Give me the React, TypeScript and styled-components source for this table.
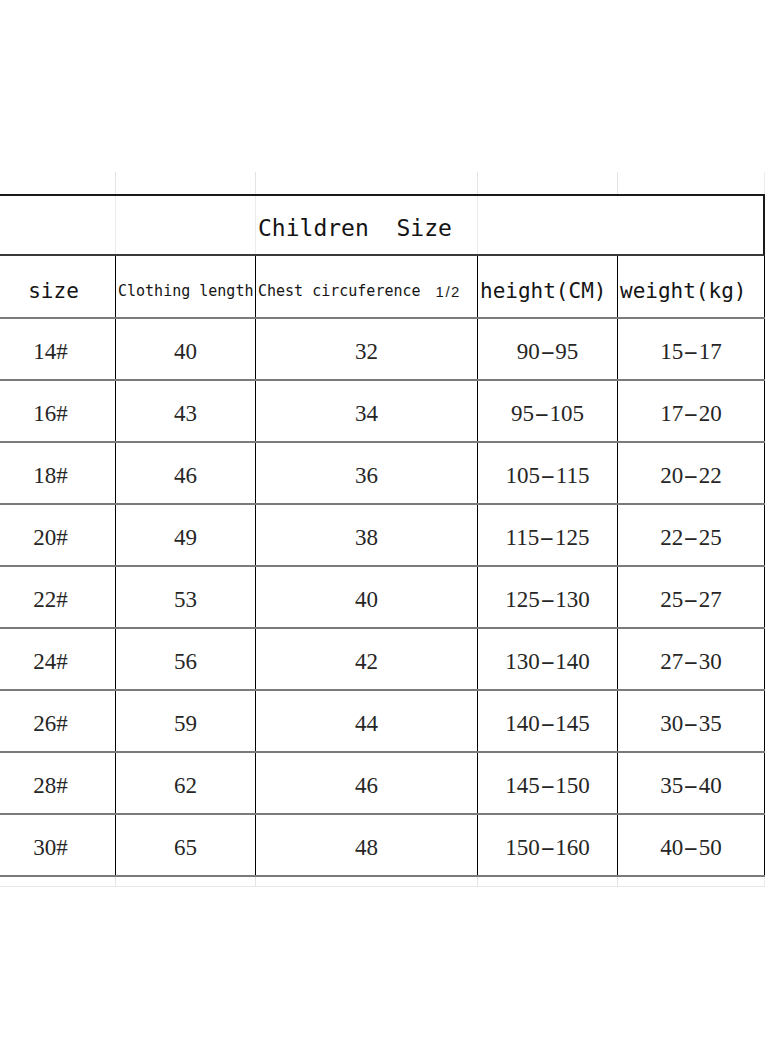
import React from "react";
import styled, { createGlobalStyle } from "styled-components";

const GlobalStyle = createGlobalStyle`
  html, body {
    margin: 0;
    padding: 0;
    background: #ffffff;
  }
`;

const COLUMNS = "116px 140px 222px 140px 147px";

const Page = styled.div`
  width: 767px;
  min-height: 1046px;
  padding-top: 172px;
  box-sizing: border-box;
  background: #ffffff;
`;

const Sheet = styled.div`
  width: 765px;
  display: flex;
  flex-direction: column;
`;

/* faint spreadsheet gridlines around the printed table */
const GhostRow = styled.div<{ $height: number; $bottom?: boolean }>`
  display: grid;
  grid-template-columns: ${COLUMNS};
  height: ${(p) => p.$height}px;
  box-sizing: border-box;
  border-bottom: ${(p) => (p.$bottom ? "1px solid #e6e6e6" : "none")};
`;

const GhostCell = styled.div<{ $last?: boolean }>`
  border-right: 1px solid ${(p) => (p.$last ? "#ececec" : "#e4e4e4")};
`;

const TitleRow = styled.div`
  display: grid;
  grid-template-columns: 116px 140px 222px 140px 145px;
  height: 62px;
  box-sizing: border-box;
  border-top: 2px solid #1a1a1a;
  border-bottom: 2px solid #3a3a3a;
  border-right: 2px solid #1a1a1a;
`;

const TitleGhost = styled.div<{ $line?: boolean }>`
  border-right: ${(p) => (p.$line ? "1px solid #ececec" : "none")};
`;

const TitleText = styled.div`
  display: flex;
  align-items: center;
  padding: 6px 0 0 2px;
  white-space: pre;
  font-family: "DejaVu Sans Mono", "Liberation Mono", monospace;
  font-size: 23px;
  color: #141414;
  border-right: 1px solid #ececec;
`;

const Row = styled.div<{ $height: number }>`
  display: grid;
  grid-template-columns: ${COLUMNS};
  height: ${(p) => p.$height}px;
  box-sizing: border-box;
  border-bottom: 2px solid #7b7b7b;
`;

const Cell = styled.div<{ $align?: "center" | "start"; $shift?: number }>`
  display: flex;
  align-items: center;
  justify-content: ${(p) => (p.$align === "start" ? "flex-start" : "center")};
  padding-right: ${(p) => p.$shift ?? 0}px;
  padding-left: ${(p) => (p.$align === "start" ? 2 : 0)}px;
  border-right: 1px solid #000000;
  box-sizing: border-box;
  overflow: visible;
  white-space: pre;
  color: #1c1c1c;
`;

const HeadText = styled.span<{ $size: number }>`
  font-family: "DejaVu Sans Mono", "Liberation Mono", monospace;
  font-size: ${(p) => p.$size}px;
  padding-top: 9px;
  color: #141414;
`;

const Fraction = styled.span`
  font-family: "Liberation Sans", Arial, sans-serif;
  font-size: 15px;
  letter-spacing: 1.5px;
  margin-left: 15px;
  padding-top: 9px;
`;

const DataText = styled.span`
  font-family: "Liberation Serif", "Times New Roman", serif;
  font-size: 23px;
  padding-top: 5px;
  color: #262626;
`;

const Dash = styled.span`
  display: inline-block;
  transform: scaleX(1.9);
  margin: 0 4px;
`;

const rows = [
  ["14#", "40", "32", "90-95", "15-17"],
  ["16#", "43", "34", "95-105", "17-20"],
  ["18#", "46", "36", "105-115", "20-22"],
  ["20#", "49", "38", "115-125", "22-25"],
  ["22#", "53", "40", "125-130", "25-27"],
  ["24#", "56", "42", "130-140", "27-30"],
  ["26#", "59", "44", "140-145", "30-35"],
  ["28#", "62", "46", "145-150", "35-40"],
  ["30#", "65", "48", "150-160", "40-50"],
];

const Range: React.FC<{ value: string }> = ({ value }) => {
  const parts = value.split("-");
  if (parts.length < 2) return <DataText>{value}</DataText>;
  return (
    <DataText>
      {parts[0]}
      <Dash>-</Dash>
      {parts[1]}
    </DataText>
  );
};

const Ghosts: React.FC<{ height: number; bottom?: boolean }> = ({ height, bottom }) => (
  <GhostRow $height={height} $bottom={bottom}>
    <GhostCell />
    <GhostCell />
    <GhostCell />
    <GhostCell />
    <GhostCell $last />
  </GhostRow>
);

const App: React.FC = () => {
  return (
    <Page>
      <GlobalStyle />
      <Sheet>
        <Ghosts height={22} />
        <TitleRow>
          <TitleGhost $line />
          <TitleGhost $line />
          <TitleText>Children  Size</TitleText>
          <TitleGhost />
          <TitleGhost />
        </TitleRow>
        <Row $height={63}>
          <Cell $shift={8}>
            <HeadText $size={21}>size</HeadText>
          </Cell>
          <Cell $align="start">
            <HeadText $size={15}>Clothing length</HeadText>
          </Cell>
          <Cell $align="start">
            <HeadText $size={15}>Chest circuference</HeadText>
            <Fraction>1/2</Fraction>
          </Cell>
          <Cell $align="start">
            <HeadText $size={21}>height(CM)</HeadText>
          </Cell>
          <Cell $align="start">
            <HeadText $size={21}>weight(kg)</HeadText>
          </Cell>
        </Row>
        {rows.map((r) => (
          <Row key={r[0]} $height={62}>
            <Cell $shift={14}>
              <DataText>{r[0]}</DataText>
            </Cell>
            <Cell>
              <DataText>{r[1]}</DataText>
            </Cell>
            <Cell>
              <DataText>{r[2]}</DataText>
            </Cell>
            <Cell>
              <Range value={r[3]} />
            </Cell>
            <Cell>
              <Range value={r[4]} />
            </Cell>
          </Row>
        ))}
        <Ghosts height={10} bottom />
      </Sheet>
    </Page>
  );
};

export default App;
